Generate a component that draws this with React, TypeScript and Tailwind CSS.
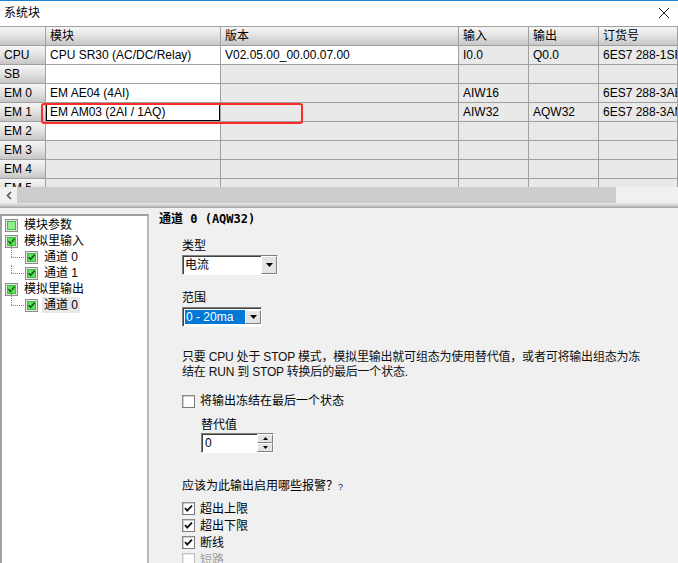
import React from "react";

const F = "font-['Liberation_Sans','Noto_Sans_CJK_SC',sans-serif]";

const rows = [
  { h: "CPU", m: "CPU SR30 (AC/DC/Relay)", v: "V02.05.00_00.00.07.00", i: "I0.0", o: "Q0.0", n: "6ES7 288-1SR30-0AA0", mw: true, vw: true },
  { h: "SB", m: "", v: "", i: "", o: "", n: "", mw: true, vw: false },
  { h: "EM 0", m: "EM AE04 (4AI)", v: "", i: "AIW16", o: "", n: "6ES7 288-3AE04-0AA0", mw: true, vw: false },
  { h: "EM 1", m: "EM AM03 (2AI / 1AQ)", v: "", i: "AIW32", o: "AQW32", n: "6ES7 288-3AM03-0AA0", mw: true, vw: false, sel: true },
  { h: "EM 2", m: "", v: "", i: "", o: "", n: "", mw: true, vw: false },
  { h: "EM 3", m: "", v: "", i: "", o: "", n: "", mw: false, vw: false },
  { h: "EM 4", m: "", v: "", i: "", o: "", n: "", mw: false, vw: false },
  { h: "EM 5", m: "", v: "", i: "", o: "", n: "", mw: false, vw: false },
];

const cols = "grid grid-cols-[46px_175px_238px_70px_70px_1fr]";
const cell = "h-[19px] border-r border-b border-[#a0a0a0] pl-[4px] leading-[18px] whitespace-nowrap overflow-hidden";
const hdr = "bg-gradient-to-b from-[#f6f6f6] via-[#e2e2e2] to-[#c6c6c6]";

function TreeBox({ partial }: { partial?: boolean }) {
  return (
    <svg width="13" height="13" viewBox="0 0 13 13" className="shrink-0">
      <rect x="0.5" y="0.5" width="12" height="12" fill="#e8e8e8" stroke="#8c8c8c" />
      <rect x="2" y="2" width="9" height="9" fill="#35c435" />
      <rect x="3" y="3" width="7" height="7" fill={partial ? "#8ff08f" : "#5fe05f"} />
      {!partial && <path d="M3.5 6.2 L5.5 8.3 L9.5 3.8" stroke="#0b5e0b" strokeWidth="1.6" fill="none" />}
    </svg>
  );
}

function Check({ checked, disabled }: { checked?: boolean; disabled?: boolean }) {
  return (
    <svg width="13" height="13" viewBox="0 0 13 13" className="shrink-0">
      <rect x="0.5" y="0.5" width="12" height="12" fill="#ffffff" stroke={disabled ? "#bcbcbc" : "#7a7a7a"} />
      <path d="M1 12 L1 1 L12 1" stroke={disabled ? "#cfcfcf" : "#a0a0a0"} fill="none" />
      {checked && <path d="M3 6 L5.2 8.6 L10 3.6" stroke="#111" strokeWidth="1.8" fill="none" />}
    </svg>
  );
}

function DropBtn() {
  return (
    <div className="w-[16px] h-full bg-[#e4e4e4] border-l border-t border-white border-r border-b border-r-[#808080] border-b-[#808080] flex items-center justify-center">
      <svg width="7" height="4" viewBox="0 0 7 4"><path d="M0 0 H7 L3.5 4 Z" fill="#000" /></svg>
    </div>
  );
}

export default function App() {
  return (
    <div className={`${F} w-[678px] h-[563px] overflow-hidden bg-[#f0f0f0] text-[12px] text-black flex flex-col relative`}>
      {/* title */}
      <div className="h-[26px] bg-white border-t border-[#1a86d6] flex items-center justify-between pl-[4px] pr-[8px] shrink-0">
        <span className="leading-[16px] -mt-[2px]">系统块</span>
        <svg width="12" height="12" viewBox="0 0 12 12" className="-mt-[2px]"><path d="M1 1 L11 11 M11 1 L1 11" stroke="#222" strokeWidth="1" /></svg>
      </div>
      {/* grid */}
      <div className="h-[161px] overflow-hidden border-t border-[#a0a0a0] bg-[#e9e9ea] relative shrink-0">
        <div className={cols}>
          <div className={`${cell} ${hdr}`}></div>
          {["模块", "版本", "输入", "输出", "订货号"].map((t) => (
            <div key={t} className={`${cell} ${hdr}`}>{t}</div>
          ))}
        </div>
        {rows.map((r) => (
          <div key={r.h} className={cols}>
            <div className={`${cell} ${hdr}`}>{r.h}</div>
            <div className={`${cell} ${r.mw ? "bg-white" : ""} relative`}>
              {r.sel && <div className="absolute left-0 top-[1px] right-0 bottom-0 border border-black" />}
              {r.m}
            </div>
            <div className={`${cell} ${r.vw ? "bg-white" : ""}`}>{r.v}</div>
            <div className={cell}>{r.i}</div>
            <div className={cell}>{r.o}</div>
            <div className={cell}>{r.n}</div>
          </div>
        ))}
        <div className="absolute left-[41px] top-[76px] w-[262px] h-[21px] border-2 border-[#ff2a2a] rounded-[3px] pointer-events-none" />
      </div>
      {/* scrollbar */}
      <div className="h-[16px] flex bg-[#f0f0f0] shrink-0">
        <div className="w-[17px] flex items-center justify-center">
          <svg width="6" height="9" viewBox="0 0 6 9"><path d="M5 1 L1.5 4.5 L5 8" stroke="#555" strokeWidth="1.6" fill="none" /></svg>
        </div>
        <div className="w-[599px] bg-[#cdcdcd]" />
      </div>
      <div className="h-[5px] bg-gradient-to-b from-[#e6e6e6] via-[#d0d0d0] to-[#a0a0a0] shrink-0" />
      {/* bottom */}
      <div className="flex-1 flex min-h-0">
        <div className="w-[149px] mt-[6px] bg-white border-l-2 border-t-2 border-[#a0a0a0] border-r-2 border-r-[#b8b8b8] pt-[1px] shrink-0">
          <div className="h-[16px] flex items-center gap-[6px] pl-[3px]"><TreeBox partial /><span className="leading-[16px]">模块参数</span></div>
          <div className="h-[16px] flex items-center gap-[6px] pl-[3px]"><TreeBox /><span className="leading-[16px]">模拟里输入</span></div>
          <div className="h-[16px] flex items-center gap-[6px] pl-[23px] relative">
            <span className="absolute left-[9px] top-[-8px] h-[16px] border-l border-dotted border-[#808080]" />
            <span className="absolute left-[9px] top-[8px] w-[13px] border-t border-dotted border-[#808080]" />
            <TreeBox /><span className="leading-[16px]">通道 0</span>
          </div>
          <div className="h-[16px] flex items-center gap-[6px] pl-[23px] relative">
            <span className="absolute left-[9px] top-0 h-[8px] border-l border-dotted border-[#808080]" />
            <span className="absolute left-[9px] top-[8px] w-[13px] border-t border-dotted border-[#808080]" />
            <TreeBox /><span className="leading-[16px]">通道 1</span>
          </div>
          <div className="h-[16px] flex items-center gap-[6px] pl-[3px]"><TreeBox /><span className="leading-[16px]">模拟里输出</span></div>
          <div className="h-[16px] flex items-center gap-[4px] pl-[23px] relative">
            <span className="absolute left-[9px] top-[-8px] h-[16px] border-l border-dotted border-[#808080]" />
            <span className="absolute left-[9px] top-[8px] w-[13px] border-t border-dotted border-[#808080]" />
            <TreeBox /><span className="leading-[16px] bg-[#e8e8e8] px-[2px]">通道 0</span>
          </div>
        </div>
        <div className="flex-1 flex flex-col pl-[10px]">
          <div className="mt-[3px] h-[16px] leading-[16px] font-bold font-['DejaVu_Sans_Mono','Noto_Sans_CJK_SC',monospace] text-[12px]">通道 0 (AQW32)</div>
          <div className="pl-[23px] flex flex-col">
            <div className="mt-[11px] h-[16px] leading-[16px]">类型</div>
            <div className="mt-[1px] w-[96px] h-[20px] flex bg-white border border-t-[#808080] border-l-[#808080] border-r-white border-b-white p-0 shadow-[inset_1px_1px_0_#404040]">
              <span className="flex-1 pl-[2px] pt-[1px] leading-[16px]">电流</span>
              <DropBtn />
            </div>
            <div className="mt-[15px] h-[16px] leading-[16px]">范围</div>
            <div className="mt-[1px] w-[80px] h-[20px] flex bg-white border border-t-[#808080] border-l-[#808080] border-r-white border-b-white shadow-[inset_1px_1px_0_#404040] pl-[2px] py-[2px]">
              <span className="w-[60px] bg-[#0078d7] text-white pl-[1px] leading-[14px]">0 - 20ma</span>
              <span className="flex-1" />
              <DropBtn />
            </div>
            <div className="mt-[23px] leading-[15px] text-[#111] whitespace-nowrap tracking-[-0.2px]">
              <div>只要 CPU 处于 STOP 模式，模拟里输出就可组态为使用替代值，或者可将输出组态为冻</div>
              <div>结在 RUN 到 STOP 转换后的最后一个状态.</div>
            </div>
            <div className="mt-[13px] h-[16px] flex items-center gap-[5px]"><Check /><span className="leading-[16px]">将输出冻结在最后一个状态</span></div>
            <div className="pl-[19px] flex flex-col">
              <div className="mt-[8px] h-[16px] leading-[16px]">替代值</div>
              <div className="w-[73px] h-[20px] flex bg-white border border-t-[#808080] border-l-[#808080] border-r-white border-b-white shadow-[inset_1px_1px_0_#404040]">
                <span className="flex-1 pl-[3px] leading-[18px]">0</span>
                <div className="w-[16px] flex flex-col">
                  <div className="flex-1 bg-[#e4e4e4] border border-t-white border-l-white border-r-[#808080] border-b-[#808080] flex items-center justify-center">
                    <svg width="5" height="3" viewBox="0 0 5 3"><path d="M0 3 H5 L2.5 0 Z" fill="#000" /></svg>
                  </div>
                  <div className="flex-1 bg-[#e4e4e4] border border-t-white border-l-white border-r-[#808080] border-b-[#808080] flex items-center justify-center">
                    <svg width="5" height="3" viewBox="0 0 5 3"><path d="M0 0 H5 L2.5 3 Z" fill="#000" /></svg>
                  </div>
                </div>
              </div>
            </div>
            <div className="mt-[25px] h-[16px] leading-[16px]">应该为此输出启用哪些报警？<span className="text-[9px] text-[#1a1a80]">?</span></div>
            <div className="mt-[6px] flex flex-col">
              <div className="h-[17px] flex items-center gap-[5px]"><Check checked /><span className="leading-[16px]">超出上限</span></div>
              <div className="h-[17px] flex items-center gap-[5px]"><Check checked /><span className="leading-[16px]">超出下限</span></div>
              <div className="h-[17px] flex items-center gap-[5px]"><Check checked /><span className="leading-[16px]">断线</span></div>
              <div className="h-[17px] flex items-center gap-[5px]"><Check disabled /><span className="leading-[16px] text-[#a0a0a0]">短路</span></div>
            </div>
          </div>
        </div>
      </div>
    </div>
  );
}
